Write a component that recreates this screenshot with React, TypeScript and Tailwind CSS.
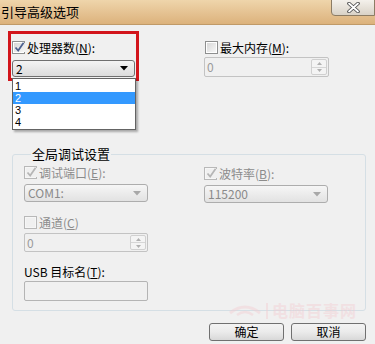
import type { ReactNode } from "react";

type CheckProps = { checked?: boolean; disabled?: boolean };

const Check = ({ checked, disabled }: CheckProps) => (
    <span
        className={`shrink-0 w-[13px] h-[13px] border p-[1px] flex ${disabled ? "border-[#b8b8b8] bg-[#f6f6f6]" : "border-[#8e8f8f] bg-white"}`}
    >
        <span
            className={`flex-1 flex items-center justify-center ${disabled ? "bg-[#f0f0f0]" : "bg-gradient-to-br from-[#d8d8d8] to-[#f7f7f7]"}`}
        >
            {checked && (
                <svg width="11" height="11" viewBox="0 0 11 11" className="-mt-[1px]">
                    <path
                        d="M1.5 5.5 L4.2 8.6 L9.6 0.8"
                        fill="none"
                        stroke={disabled ? "#b5b5b5" : "#4b5f8f"}
                        strokeWidth="1.7"
                    />
                </svg>
            )}
        </span>
    </span>
);

const CheckRow = ({ checked, disabled, children }: CheckProps & { children: ReactNode }) => (
    <div className="flex items-center gap-[2px] h-[13px]">
        <Check checked={checked} disabled={disabled} />
        <span className={`text-[12px] leading-[13px] whitespace-nowrap ${disabled ? "text-[#8c8c8c]" : "text-black"}`}>
            {children}
        </span>
    </div>
);

const Arrow = ({ color }: { color: string }) => (
    <svg width="8" height="5" viewBox="0 0 8 5">
        <path d="M0 0 H8 L4 4.5 Z" fill={color} />
    </svg>
);

const SpinBox = ({ w, h }: { w: string; h: string }) => (
    <div className={`${w} ${h} flex border border-[#c3c3c3] rounded-[2px] bg-[#f0f0f0]`}>
        <span className="flex-1 pl-[2px] text-[12px] leading-[17px] text-[#9a9a9a]">0</span>
        <div className="w-[16px] my-[1px] mr-[1px] flex flex-col border border-[#d0d0d0] rounded-[2px] bg-[#f4f4f4]">
            <div className="flex-1 flex items-center justify-center border-b border-[#d6d6d6]">
                <svg width="5" height="3" viewBox="0 0 5 3">
                    <path d="M0 3 H5 L2.5 0 Z" fill="#b0b0b0" />
                </svg>
            </div>
            <div className="flex-1 flex items-center justify-center">
                <svg width="5" height="3" viewBox="0 0 5 3">
                    <path d="M0 0 H5 L2.5 3 Z" fill="#b0b0b0" />
                </svg>
            </div>
        </div>
    </div>
);

const DisabledCombo = ({ value }: { value: string }) => (
    <div className="w-[124px] h-[18px] flex items-center justify-between px-[3px] border border-[#adadad] rounded-[3px] bg-gradient-to-b from-[#f6f6f6] to-[#e2e2e2]">
        <span className="text-[12px] leading-[14px] text-[#8a8a8a]">{value}</span>
        <span className="mr-[3px]">
            <Arrow color="#a8a8a8" />
        </span>
    </div>
);

const Button = ({ children }: { children: ReactNode }) => (
    <button className="w-[75px] h-[18px] border border-[#707070] rounded-[3px] bg-gradient-to-b from-[#f3f3f3] via-[#ebebeb] to-[#d8d8d8] text-[12px] leading-[14px] text-black">
        {children}
    </button>
);

const App = () => {
    return (
        <div className="relative w-[375px] h-[344px] overflow-hidden bg-[#f0f0f0] font-['Noto_Sans_CJK_SC',sans-serif]">
            {/* title bar */}
            <div className="h-[25px] flex items-start justify-between bg-gradient-to-b from-[#efd5ab] to-[#dcb27c] border-b border-[#c09a68]">
                <span className="pl-[1px] pt-[4px] text-[13px] leading-[15px] text-black">引导高级选项</span>
                <div className="w-[44px] h-[17px] -mt-[1px] flex items-center justify-center border border-[#8c7c64] rounded-bl-[4px] bg-gradient-to-b from-[#f4f1ec] to-[#d9d2c6]">
                    <svg width="13" height="11" viewBox="0 0 13 11">
                        <path d="M2 1.5 L11 9.5 M11 1.5 L2 9.5" stroke="#4a4a4a" strokeWidth="3.6" strokeLinecap="round" />
                        <path d="M2 1.5 L11 9.5 M11 1.5 L2 9.5" stroke="#ffffff" strokeWidth="1.8" strokeLinecap="round" />
                    </svg>
                </div>
            </div>

            {/* top options */}
            <div className="mt-[6px] flex items-start">
                <div className="relative ml-[8px] w-[131px] h-[50px] border-[3px] border-[#d2151b] pt-[7px] pl-[1px]">
                    <CheckRow checked>
                        处理器数(<u>N</u>):
                    </CheckRow>
                    <div className="mt-[6px] w-[123px] h-[17px] flex items-center justify-between px-[3px] border border-[#707070] rounded-[3px] bg-gradient-to-b from-[#f4f4f4] to-[#dcdcdc]">
                        <span className="text-[12px] leading-[14px] text-black">2</span>
                        <span className="mr-[3px]">
                            <Arrow color="#000000" />
                        </span>
                    </div>
                    {/* open list */}
                    <div className="absolute left-[1px] top-[44px] w-[124px] z-10 border border-[#646464] bg-white shadow-[2px_2px_2px_rgba(0,0,0,0.3)] py-[1px] font-['Liberation_Sans',sans-serif]">
                        {["1", "2", "3", "4"].map((n) => (
                            <div
                                key={n}
                                className={`h-[12px] pl-[2px] text-[11px] leading-[12px] overflow-hidden ${n === "2" ? "bg-[#3399ff] text-white" : "text-black"}`}
                            >
                                {n}
                            </div>
                        ))}
                    </div>
                </div>
                <div className="ml-[65px] mt-[10px] flex flex-col gap-[3px]">
                    <div className="pl-[1px]">
                        <CheckRow>
                            最大内存(<u>M</u>):
                        </CheckRow>
                    </div>
                    <SpinBox w="w-[125px]" h="h-[20px]" />
                </div>
            </div>

            {/* group box */}
            <fieldset className="mt-[66px] ml-[12px] mr-[9px] h-[164px] border border-[#d5dfe5] rounded-[3px] pl-[11px]">
                <legend className="ml-[7px] px-[1px] text-[13px] leading-[14px] text-black">全局调试设置</legend>
                <div className="mt-[5px] grid grid-cols-[124px_124px] gap-x-[56px]">
                    <div className="flex flex-col gap-[5px]">
                        <CheckRow checked disabled>
                            调试端口(<u>E</u>):
                        </CheckRow>
                        <DisabledCombo value="COM1:" />
                    </div>
                    <div className="flex flex-col gap-[5px] pt-[1px]">
                        <CheckRow checked disabled>
                            波特率(<u>B</u>):
                        </CheckRow>
                        <DisabledCombo value="115200" />
                    </div>
                </div>
                <div className="mt-[13px] flex flex-col gap-[4px]">
                    <CheckRow disabled>
                        通道(<u>C</u>)
                    </CheckRow>
                    <SpinBox w="w-[124px]" h="h-[19px]" />
                </div>
                <div className="mt-[13px] text-[12px] leading-[14px] text-black">
                    USB 目标名(<u>T</u>):
                </div>
                <div className="mt-[2px] w-[124px] h-[20px] border border-[#b4b4b4] rounded-[2px] bg-[#f0f0f0]" />
            </fieldset>

            {/* buttons */}
            <div className="mt-[12px] mr-[9px] flex justify-end gap-[7px]">
                <Button>确定</Button>
                <Button>取消</Button>
            </div>

            {/* watermark */}
            <div className="absolute left-[228px] top-[302px] flex items-center gap-[4px] pointer-events-none opacity-40">
                <svg width="34" height="16" viewBox="0 0 34 16">
                    <path d="M2 10 Q17 -2 32 10" fill="none" stroke="#f4c9cf" strokeWidth="3" />
                    <path d="M9 12 Q17 6 25 12" fill="none" stroke="#f4c9cf" strokeWidth="2.5" />
                </svg>
                <span className="w-[2px] h-[16px] bg-[#f4c9cf]" />
                <span className="text-[16px] leading-[17px] font-bold text-[#f4c9cf] tracking-[1px]">电脑百事网</span>
            </div>
        </div>
    );
};

export default App;
